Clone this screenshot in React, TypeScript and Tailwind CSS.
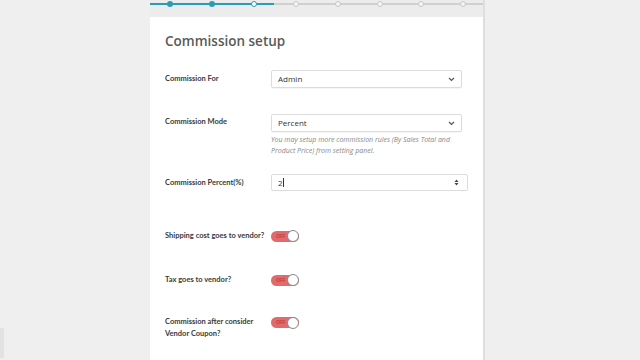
import React from "react";

const font = { fontFamily: '"Open Sans", "Noto Sans", sans-serif' };
const labelFont = { fontFamily: 'Lato, "Open Sans", sans-serif' };

function Chevron() {
  return (
    <svg width="7" height="5" viewBox="0 0 7 5" className="mr-[6px]">
      <path d="M1 1l2.5 2.5L6 1" fill="none" stroke="#555" strokeWidth="1.2" />
    </svg>
  );
}

function Spinner() {
  return (
    <svg width="5" height="7" viewBox="0 0 5 7" className="mr-[8px]">
      <path d="M0.5 3L2.5 0.5L4.5 3Z" fill="#444" />
      <path d="M0.5 4L2.5 6.5L4.5 4Z" fill="#444" />
    </svg>
  );
}

function Toggle() {
  return (
    <div className="flex items-center w-[28px] h-[11px] rounded-full bg-[#e36a6c] relative">
      <span className="text-[5px] leading-none text-[#b03a3a] font-semibold pl-[5px]">OFF</span>
      <span className="absolute right-0 top-[-0.5px] w-[12px] h-[12px] rounded-full bg-white border-[1.5px] border-[#8a8a8a]" />
    </div>
  );
}

function Label({ children, className = "" }: { children: React.ReactNode; className?: string }) {
  return (
    <div
      className={`w-[106px] shrink-0 whitespace-nowrap text-[7.5px] leading-[12px] font-bold text-[#3a3a3a] ${className}`}
      style={labelFont}
    >
      {children}
    </div>
  );
}

function Select({ value }: { value: string }) {
  return (
    <div className="w-[191px] h-[18px] border border-[#dcdcdc] rounded-[2px] bg-white flex items-center justify-between shadow-[0_1px_1px_rgba(0,0,0,0.04)]">
      <span className="pl-[6px] text-[8px] text-[#333]">{value}</span>
      <Chevron />
    </div>
  );
}

export default function App() {
  const steps = [170, 212, 254, 296, 338, 380, 421, 463];
  return (
    <div className="w-[640px] h-[360px] bg-[#efefef] flex overflow-hidden" style={font}>
      <div className="w-[150px] shrink-0 flex flex-col pt-[328px]">
        <div className="w-[4px] h-[30px] bg-[#e2e2e2]" />
      </div>
      <div className="w-[333px] shrink-0 flex flex-col">
        <div className="h-[17px] shrink-0 relative bg-[#ececec]">
          <div className="absolute left-0 top-[3px] h-[2px] w-[124px] bg-[#2a9db6]" />
          <div className="absolute left-[124px] top-[3px] h-[2px] w-[209px] bg-[#d0d0d0]" />
          {steps.map((x, i) => (
            <span
              key={i}
              className={
                i < 2
                  ? "absolute top-[1px] w-[6px] h-[6px] rounded-full bg-[#2a9db6]"
                  : i === 2
                  ? "absolute top-[1px] w-[6px] h-[6px] rounded-full bg-white border-[1.5px] border-[#2a9db6]"
                  : "absolute top-[1px] w-[6px] h-[6px] rounded-full bg-[#f4f4f4] border border-[#c8c8c8]"
              }
              style={{ left: x - 150 - 3 }}
            />
          ))}
        </div>
        <div className="flex-1 bg-white pl-[15px] pt-[14px]">
          <h2 className="text-[13.5px] leading-[20px] font-semibold text-[#5a5a5a]">Commission setup</h2>

          <div className="flex items-start mt-[19px]">
            <Label className="pt-[3px]">Commission For</Label>
            <Select value="Admin" />
          </div>

          <div className="flex items-start mt-[26px]">
            <Label className="pt-[2px]">Commission Mode</Label>
            <div className="flex flex-col">
              <Select value="Percent" />
              <p className="mt-[2px] w-[190px] text-[7px] leading-[11px] italic text-[#888]">
                You may setup more commission rules (By Sales Total and Product Price) from setting panel.
              </p>
            </div>
          </div>

          <div className="flex items-start mt-[18px]">
            <Label className="pt-[3px]">Commission Percent(%)</Label>
            <div className="w-[197px] h-[17px] border border-[#dcdcdc] rounded-[2px] bg-white flex items-center justify-between">
              <span className="pl-[6px] text-[8px] text-[#333] flex items-center">
                2<span className="inline-block w-px h-[9px] bg-[#333]" />
              </span>
              <Spinner />
            </div>
          </div>

          <div className="flex items-center mt-[39px]">
            <Label>Shipping cost goes to vendor?</Label>
            <Toggle />
          </div>

          <div className="flex items-center mt-[32px]">
            <Label>Tax goes to vendor?</Label>
            <Toggle />
          </div>

          <div className="flex items-start mt-[31px]">
            <Label className="mt-[-1px]">
              Commission after consider
              <br />
              Vendor Coupon?
            </Label>
            <Toggle />
          </div>
        </div>
      </div>
      <div className="w-[2px] shrink-0 bg-[#dedede]" />
      <div className="flex-1" />
    </div>
  );
}
